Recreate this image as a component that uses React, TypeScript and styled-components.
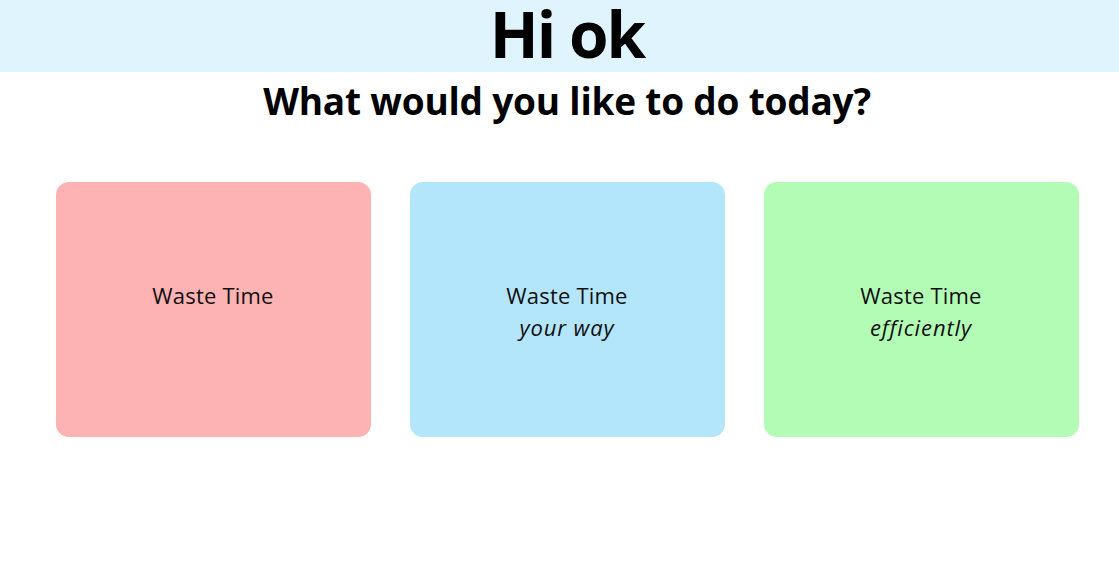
import React from "react";
import styled, { createGlobalStyle } from "styled-components";

const GlobalStyle = createGlobalStyle`
  html, body {
    margin: 0;
    padding: 0;
    background: #ffffff;
    font-family: "Open Sans", "Noto Sans", sans-serif;
    color: #000;
  }
`;

const Page = styled.div`
  display: flex;
  flex-direction: column;
  width: 1119px;
  height: 569px;
`;

const Banner = styled.header`
  display: flex;
  align-items: center;
  justify-content: center;
  height: 72px;
  box-sizing: border-box;
  padding: 0 0 4px 15px;
  background: #e0f4fd;
`;

const Title = styled.h1`
  margin: 0;
  font-size: 64px;
  font-weight: 700;
  line-height: 64px;
  letter-spacing: -2px;
`;

const Subtitle = styled.h2`
  margin: 0;
  height: 56px;
  padding-left: 15px;
  display: flex;
  align-items: center;
  justify-content: center;
  font-size: 37px;
  font-weight: 700;
  letter-spacing: -0.2px;
`;

const Cards = styled.div`
  display: grid;
  grid-template-columns: repeat(3, 315px);
  justify-content: center;
  column-gap: 39px;
  padding: 54px 0 0 15px;
`;

const Card = styled.div<{ $bg: string }>`
  height: 255px;
  border-radius: 13px;
  background: ${(p) => p.$bg};
  display: flex;
  flex-direction: column;
  align-items: center;
  justify-content: center;
  padding-top: 2px;
  box-sizing: border-box;
  font-size: 22px;
  line-height: 32px;
  letter-spacing: 0.2px;
  color: #111;
`;

const Label = styled.span``;

const Sub = styled.em`
  font-style: italic;
  letter-spacing: 0.9px;
  min-height: 32px;
`;

const cards = [
  { bg: "#fdb2b3", sub: "" },
  { bg: "#b3e5fb", sub: "your way" },
  { bg: "#b3fcb6", sub: "efficiently" },
];

export default function App() {
  return (
    <Page>
      <GlobalStyle />
      <Banner>
        <Title>Hi ok</Title>
      </Banner>
      <Subtitle>What would you like to do today?</Subtitle>
      <Cards>
        {cards.map((c, i) => (
          <Card key={i} $bg={c.bg}>
            <Label>Waste Time</Label>
            <Sub>{c.sub}</Sub>
          </Card>
        ))}
      </Cards>
    </Page>
  );
}
